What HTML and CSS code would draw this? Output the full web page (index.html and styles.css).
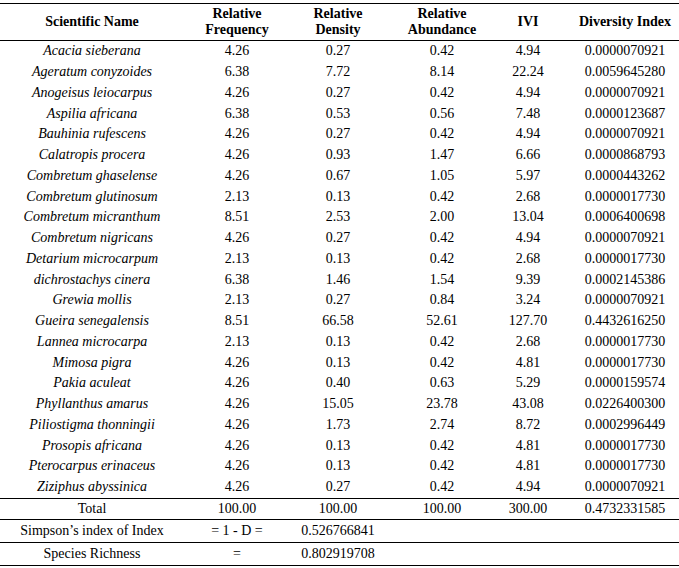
FILE: index.html
```html
<!DOCTYPE html>
<html>
<head>
<meta charset="utf-8">
<link rel="stylesheet" href="styles.css">
</head>
<body>
<table class="tbl">
<colgroup>
<col class="c1"><col class="c2"><col class="c3"><col class="c4"><col class="c5"><col class="c6">
</colgroup>
<thead>
<tr class="head">
<th class="k1">Scientific Name</th>
<th class="k2">Relative<br>Frequency</th>
<th class="k3">Relative<br>Density</th>
<th class="k4">Relative<br>Abundance</th>
<th class="k5">IVI</th>
<th class="k6">Diversity Index</th>
</tr>
</thead>
<tbody class="data">
<tr><td class="k1 sp">Acacia sieberana</td><td class="k2">4.26</td><td class="k3">0.27</td><td class="k4">0.42</td><td class="k5">4.94</td><td class="k6">0.0000070921</td></tr>
<tr><td class="k1 sp">Ageratum conyzoides</td><td class="k2">6.38</td><td class="k3">7.72</td><td class="k4">8.14</td><td class="k5">22.24</td><td class="k6">0.0059645280</td></tr>
<tr><td class="k1 sp">Anogeisus leiocarpus</td><td class="k2">4.26</td><td class="k3">0.27</td><td class="k4">0.42</td><td class="k5">4.94</td><td class="k6">0.0000070921</td></tr>
<tr><td class="k1 sp">Aspilia africana</td><td class="k2">6.38</td><td class="k3">0.53</td><td class="k4">0.56</td><td class="k5">7.48</td><td class="k6">0.0000123687</td></tr>
<tr><td class="k1 sp">Bauhinia rufescens</td><td class="k2">4.26</td><td class="k3">0.27</td><td class="k4">0.42</td><td class="k5">4.94</td><td class="k6">0.0000070921</td></tr>
<tr><td class="k1 sp">Calatropis procera</td><td class="k2">4.26</td><td class="k3">0.93</td><td class="k4">1.47</td><td class="k5">6.66</td><td class="k6">0.0000868793</td></tr>
<tr><td class="k1 sp">Combretum ghaselense</td><td class="k2">4.26</td><td class="k3">0.67</td><td class="k4">1.05</td><td class="k5">5.97</td><td class="k6">0.0000443262</td></tr>
<tr><td class="k1 sp">Combretum glutinosum</td><td class="k2">2.13</td><td class="k3">0.13</td><td class="k4">0.42</td><td class="k5">2.68</td><td class="k6">0.0000017730</td></tr>
<tr><td class="k1 sp">Combretum micranthum</td><td class="k2">8.51</td><td class="k3">2.53</td><td class="k4">2.00</td><td class="k5">13.04</td><td class="k6">0.0006400698</td></tr>
<tr><td class="k1 sp">Combretum nigricans</td><td class="k2">4.26</td><td class="k3">0.27</td><td class="k4">0.42</td><td class="k5">4.94</td><td class="k6">0.0000070921</td></tr>
<tr><td class="k1 sp">Detarium microcarpum</td><td class="k2">2.13</td><td class="k3">0.13</td><td class="k4">0.42</td><td class="k5">2.68</td><td class="k6">0.0000017730</td></tr>
<tr><td class="k1 sp">dichrostachys cinera</td><td class="k2">6.38</td><td class="k3">1.46</td><td class="k4">1.54</td><td class="k5">9.39</td><td class="k6">0.0002145386</td></tr>
<tr><td class="k1 sp">Grewia mollis</td><td class="k2">2.13</td><td class="k3">0.27</td><td class="k4">0.84</td><td class="k5">3.24</td><td class="k6">0.0000070921</td></tr>
<tr><td class="k1 sp">Gueira senegalensis</td><td class="k2">8.51</td><td class="k3">66.58</td><td class="k4">52.61</td><td class="k5">127.70</td><td class="k6">0.4432616250</td></tr>
<tr><td class="k1 sp">Lannea microcarpa</td><td class="k2">2.13</td><td class="k3">0.13</td><td class="k4">0.42</td><td class="k5">2.68</td><td class="k6">0.0000017730</td></tr>
<tr><td class="k1 sp">Mimosa pigra</td><td class="k2">4.26</td><td class="k3">0.13</td><td class="k4">0.42</td><td class="k5">4.81</td><td class="k6">0.0000017730</td></tr>
<tr><td class="k1 sp">Pakia aculeat</td><td class="k2">4.26</td><td class="k3">0.40</td><td class="k4">0.63</td><td class="k5">5.29</td><td class="k6">0.0000159574</td></tr>
<tr><td class="k1 sp">Phyllanthus amarus</td><td class="k2">4.26</td><td class="k3">15.05</td><td class="k4">23.78</td><td class="k5">43.08</td><td class="k6">0.0226400300</td></tr>
<tr><td class="k1 sp">Piliostigma thonningii</td><td class="k2">4.26</td><td class="k3">1.73</td><td class="k4">2.74</td><td class="k5">8.72</td><td class="k6">0.0002996449</td></tr>
<tr><td class="k1 sp">Prosopis africana</td><td class="k2">4.26</td><td class="k3">0.13</td><td class="k4">0.42</td><td class="k5">4.81</td><td class="k6">0.0000017730</td></tr>
<tr><td class="k1 sp">Pterocarpus erinaceus</td><td class="k2">4.26</td><td class="k3">0.13</td><td class="k4">0.42</td><td class="k5">4.81</td><td class="k6">0.0000017730</td></tr>
<tr><td class="k1 sp">Ziziphus abyssinica</td><td class="k2">4.26</td><td class="k3">0.27</td><td class="k4">0.42</td><td class="k5">4.94</td><td class="k6">0.0000070921</td></tr>
</tbody>
<tbody class="foot">
<tr class="total"><td class="k1">Total</td><td class="k2">100.00</td><td class="k3">100.00</td><td class="k4">100.00</td><td class="k5">300.00</td><td class="k6">0.4732331585</td></tr>
<tr class="extra"><td class="k1">Simpson’s index of Index</td><td class="k2">= 1 - D =</td><td class="k3">0.526766841</td><td class="k4"></td><td class="k5"></td><td class="k6"></td></tr>
<tr class="extra"><td class="k1">Species Richness</td><td class="k2">=</td><td class="k3">0.802919708</td><td class="k4"></td><td class="k5"></td><td class="k6"></td></tr>
</tbody>
</table>
</body>
</html>
```
FILE: styles.css
```css
html, body {
  margin: 0;
  padding: 0;
  background: #ffffff;
}
body {
  padding-top: 3px;
  font-family: "Liberation Serif", "Times New Roman", serif;
  font-size: 14px;
  color: #000000;
}
.tbl {
  width: 679px;
  border-collapse: collapse;
  table-layout: fixed;
}
.c1 { width: 184px; }
.c2 { width: 106px; }
.c3 { width: 96px; }
.c4 { width: 112px; }
.c5 { width: 60px; }
.c6 { width: 121px; }
.tbl th, .tbl td {
  padding: 0;
  text-align: center;
  white-space: nowrap;
  vertical-align: middle;
}
.tbl .k6 { padding-left: 13px; }
.head th {
  font-weight: bold;
  font-size: 14px;
  line-height: 16px;
  height: 36px;
  border-top: 1px solid #000;
  border-bottom: 1px solid #000;
}
.data td {
  height: 20.75px;
  line-height: 16px;
}
.sp { font-style: italic; }
.foot td {
  border-top: 1px solid #000;
  border-bottom: 1px solid #000;
  line-height: 16px;
}
.total td { height: 20px; }
.extra td { height: 22px; }
```
